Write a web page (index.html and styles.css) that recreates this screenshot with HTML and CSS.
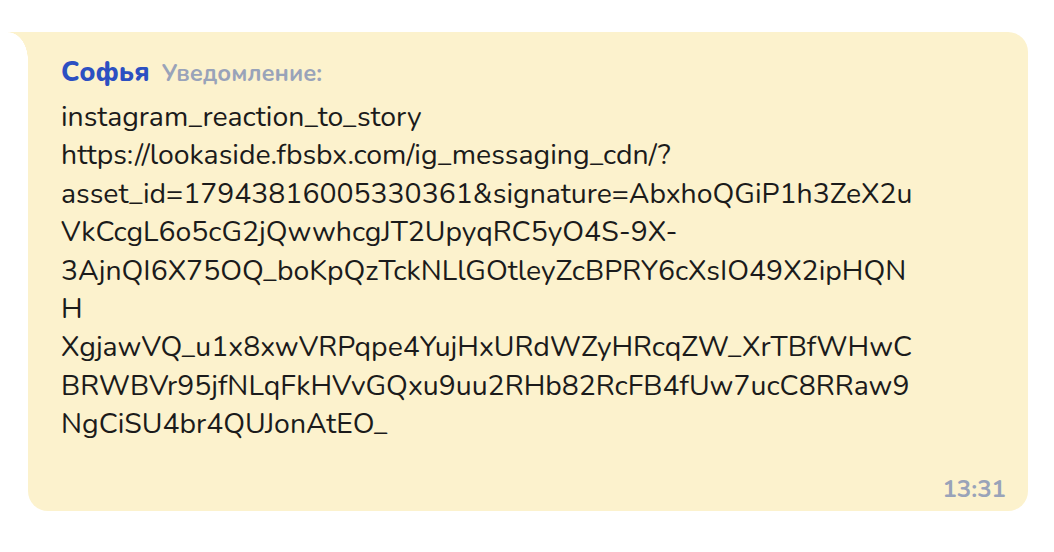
FILE: index.html
```html
<!DOCTYPE html>
<html lang="ru">
<head>
<meta charset="utf-8">
<link rel="stylesheet" href="styles.css">
</head>
<body>
<div class="bubble">
  <div class="header">
    <span class="name">Софья</span>
    <span class="label">Уведомление:</span>
  </div>
  <div class="text">
    <div class="line">instagram_reaction_to_story</div>
    <div class="line">https://lookaside.fbsbx.com/ig_messaging_cdn/?</div>
    <div class="line">asset_id=17943816005330361&amp;signature=AbxhoQGiP1h3ZeX2u</div>
    <div class="line">VkCcgL6o5cG2jQwwhcgJT2UpyqRC5yO4S-9X-</div>
    <div class="line">3AjnQI6X75OQ_boKpQzTckNLlGOtleyZcBPRY6cXsIO49X2ipHQN</div>
    <div class="line">H</div>
    <div class="line">XgjawVQ_u1x8xwVRPqpe4YujHxURdWZyHRcqZW_XrTBfWHwC</div>
    <div class="line">BRWBVr95jfNLqFkHVvGQxu9uu2RHb82RcFB4fUw7ucC8RRaw9</div>
    <div class="line">NgCiSU4br4QUJonAtEO_</div>
  </div>
  <div class="time">13:31</div>
</div>
</body>
</html>
```
FILE: styles.css
```css
html, body {
  margin: 0;
  padding: 0;
  background: #ffffff;
}
body {
  font-family: "Nunito", "Lato", "Open Sans", sans-serif;
}
.bubble {
  position: relative;
  box-sizing: border-box;
  width: 1000px;
  height: 479px;
  margin: 32px 0 0 28px;
  padding: 22px 22px 0 33px;
  background: #fcf2cd;
  border-radius: 0 20px 20px 20px;
}
.bubble::before {
  content: "";
  position: absolute;
  left: -20px;
  top: 0;
  width: 20px;
  height: 28px;
  background: radial-gradient(ellipse 20px 28px at 0 100%, rgba(252,242,205,0) 98%, #fcf2cd 100%);
}
.header {
  display: flex;
  align-items: baseline;
  gap: 12px;
  height: 44px;
}
.name {
  color: #2c50c2;
  font-weight: 800;
  font-size: 27px;
}
.label {
  color: #99a3b9;
  font-weight: 700;
  font-size: 23.6px;
}
.text {
  color: #1b1b1b;
  font-size: 28.4px;
  line-height: 38.4px;
}
.line {
  white-space: nowrap;
}
.time {
  text-align: right;
  color: #99a3b9;
  font-weight: 700;
  font-size: 24px;
  margin-top: 29px;
}
```
